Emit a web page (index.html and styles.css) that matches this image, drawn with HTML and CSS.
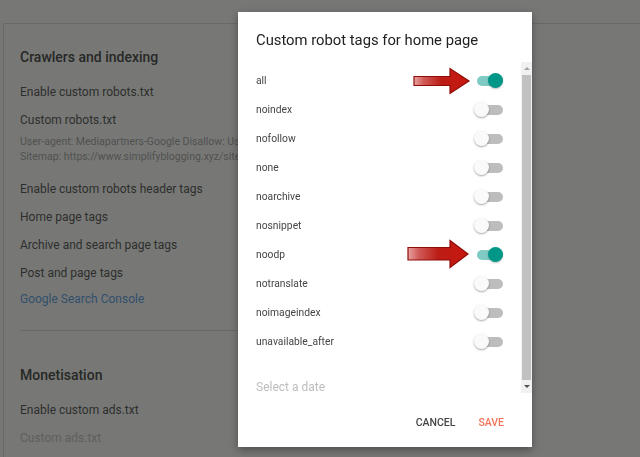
FILE: index.html
```html
<!DOCTYPE html>
<html lang="en">
<head>
<meta charset="utf-8">
<title>Settings – Crawlers and indexing</title>
<link rel="stylesheet" href="styles.css">
</head>
<body>
<main class="page">
  <div class="card">
    <section class="section">
      <h2 class="section-title">Crawlers and indexing</h2>
      <div class="setting">Enable custom robots.txt</div>
      <div class="setting">Custom robots.txt</div>
      <div class="code-line">User-agent: Mediapartners-Google Disallow: User-agent: * Disallow: /search Allow: /</div>
      <div class="code-line">Sitemap: https://www.simplifyblogging.xyz/sitemap.xml</div>
      <div class="setting gap">Enable custom robots header tags</div>
      <div class="setting">Home page tags</div>
      <div class="setting">Archive and search page tags</div>
      <div class="setting">Post and page tags</div>
      <div class="setting link">Google Search Console</div>
    </section>
    <section class="section second">
      <h2 class="section-title">Monetisation</h2>
      <div class="setting">Enable custom ads.txt</div>
      <div class="setting disabled">Custom ads.txt</div>
    </section>
  </div>
</main>

<div class="scrim"></div>

<div class="dialog" role="dialog" aria-label="Custom robot tags for home page">
  <h1 class="dialog-title">Custom robot tags for home page</h1>
  <div class="dialog-body">
    <div class="tag-list">
      <div class="tag-row">
        <span class="tag-name">all</span>
        <span class="switch on"><span class="track"></span><span class="thumb"></span></span>
        <svg class="pointer" width="58" height="28" viewBox="0 0 58 28" aria-hidden="true">
          <defs>
            <linearGradient id="shaft1" x1="0" x2="1" y1="0" y2="0">
              <stop offset="0" stop-color="#e7a3a1"/>
              <stop offset="0.18" stop-color="#cf5a57"/>
              <stop offset="0.5" stop-color="#bb1d16"/>
              <stop offset="1" stop-color="#c8170e"/>
            </linearGradient>
          </defs>
          <polygon points="1,9.5 37,9.5 37,1.5 56,14 37,26.5 37,18.5 1,18.5" fill="url(#shaft1)" stroke="#8e0d08" stroke-width="1.2" stroke-linejoin="miter"/>
        </svg>
      </div>
      <div class="tag-row"><span class="tag-name">noindex</span><span class="switch"><span class="track"></span><span class="thumb"></span></span></div>
      <div class="tag-row"><span class="tag-name">nofollow</span><span class="switch"><span class="track"></span><span class="thumb"></span></span></div>
      <div class="tag-row"><span class="tag-name">none</span><span class="switch"><span class="track"></span><span class="thumb"></span></span></div>
      <div class="tag-row"><span class="tag-name">noarchive</span><span class="switch"><span class="track"></span><span class="thumb"></span></span></div>
      <div class="tag-row"><span class="tag-name">nosnippet</span><span class="switch"><span class="track"></span><span class="thumb"></span></span></div>
      <div class="tag-row">
        <span class="tag-name">noodp</span>
        <span class="switch on"><span class="track"></span><span class="thumb"></span></span>
        <svg class="pointer long" width="64" height="30" viewBox="0 0 64 30" aria-hidden="true">
          <defs>
            <linearGradient id="shaft2" x1="0" x2="1" y1="0" y2="0">
              <stop offset="0" stop-color="#e7a3a1"/>
              <stop offset="0.18" stop-color="#cf5a57"/>
              <stop offset="0.5" stop-color="#bb1d16"/>
              <stop offset="1" stop-color="#c8170e"/>
            </linearGradient>
          </defs>
          <polygon points="1,8.5 43,8.5 43,1.5 61,15 43,28.5 43,21 1,21" fill="url(#shaft2)" stroke="#8e0d08" stroke-width="1.2" stroke-linejoin="miter"/>
        </svg>
      </div>
      <div class="tag-row"><span class="tag-name">notranslate</span><span class="switch"><span class="track"></span><span class="thumb"></span></span></div>
      <div class="tag-row"><span class="tag-name">noimageindex</span><span class="switch"><span class="track"></span><span class="thumb"></span></span></div>
      <div class="tag-row"><span class="tag-name">unavailable_after</span><span class="switch"><span class="track"></span><span class="thumb"></span></span></div>
      <div class="date-field">Select a date</div>
    </div>
    <div class="scrollbar" aria-hidden="true">
      <span class="arrow up"></span>
      <span class="scroll-thumb"></span>
      <span class="arrow down"></span>
    </div>
  </div>
  <div class="dialog-actions">
    <button class="btn">CANCEL</button>
    <button class="btn primary">SAVE</button>
  </div>
</div>
</body>
</html>
```

FILE: styles.css
```css
* {
  box-sizing: border-box;
}

html,
body {
  margin: 0;
  height: 100%;
  overflow: hidden;
  background: #ffffff;
  font-family: Roboto, "Noto Sans", "Liberation Sans", sans-serif;
}

/* ---------- settings page underneath ---------- */

.page {
  padding: 23px 0 0 3px;
}

.card {
  border: 1px solid #e0e0e0;
  border-right: none;
  width: 700px;
  background: #ffffff;
}

.section {
  margin: 0 0 0 16px;
  padding: 23px 0 19px;
  border-bottom: 1px solid #dedede;
  width: 330px;
}

.section.second {
  border-bottom: none;
  padding-top: 34px;
}

.section-title {
  margin: 0 0 11px;
  font-size: 14px;
  line-height: 20px;
  font-weight: 500;
  color: #525252;
  white-space: nowrap;
}

.setting {
  font-size: 12px;
  line-height: 28px;
  color: #616161;
  white-space: nowrap;
}

.setting.gap {
  margin-top: 11px;
}

.setting.link {
  line-height: 24px;
  color: #6aa6e8;
}

.setting.disabled {
  color: #c9c9c9;
}

/* long values run on under the dialog, so the line stops at its edge */
.code-line {
  width: 218px;
  overflow: hidden;
  font-size: 10.5px;
  line-height: 15px;
  color: #ababab;
  white-space: nowrap;
}

/* ---------- modal ---------- */

.scrim {
  position: fixed;
  inset: 0;
  background: rgba(3, 5, 1, 0.54);
}

.dialog {
  position: absolute;
  left: 238px;
  top: 12px;
  width: 294px;
  height: 435px;
  background: #ffffff;
  box-shadow: 0 3px 8px rgba(0, 0, 0, 0.35);
  display: flex;
  flex-direction: column;
}

.dialog-title {
  margin: 0;
  padding: 18px 18px 0;
  font-size: 14.8px;
  line-height: 20px;
  font-weight: 400;
  color: #222222;
}

.dialog-body {
  margin-top: 12px;
  height: 331px;
  display: flex;
}

.tag-list {
  flex: 1;
  overflow: hidden;
  padding: 4px 18px 0;
}

.tag-row {
  position: relative;
  height: 29px;
  display: flex;
  align-items: center;
  justify-content: space-between;
}

.tag-name {
  font-size: 10.3px;
  color: #454545;
}

/* toggle */
.switch {
  position: relative;
  width: 29px;
  height: 16px;
  display: flex;
  align-items: center;
  justify-content: flex-end;
}

.track {
  width: 26px;
  height: 10px;
  border-radius: 5px;
  background: #bdbdbd;
}

.thumb {
  position: absolute;
  left: 0;
  top: 0.5px;
  width: 15px;
  height: 15px;
  border-radius: 50%;
  background: #fafafa;
  box-shadow: 0 1px 2px rgba(0, 0, 0, 0.35);
}

.switch.on .track {
  background: #7fcbc4;
}

.switch.on .thumb {
  left: auto;
  right: 0;
  background: #009688;
  box-shadow: 0 1px 2px rgba(0, 0, 0, 0.25);
}

/* red callout arrows */
.pointer {
  position: absolute;
  right: 32px;
  top: 1px;
}

.pointer.long {
  right: 32px;
  top: -1px;
}

.date-field {
  margin-top: 25px;
  height: 12px;
  line-height: 12px;
  font-size: 12px;
  color: #bdbdbd;
}

/* scrollbar */
.scrollbar {
  width: 11px;
  background: #f1f1f1;
  display: flex;
  flex-direction: column;
  align-items: center;
}

.arrow {
  height: 13px;
  display: flex;
  align-items: center;
  justify-content: center;
}

.arrow.up::before,
.arrow.down::before {
  content: "";
  width: 0;
  height: 0;
  border-left: 3px solid transparent;
  border-right: 3px solid transparent;
}

.arrow.up::before {
  border-bottom: 3px solid #a3a3a3;
}

.arrow.down::before {
  border-top: 3px solid #505050;
}

.scroll-thumb {
  flex: 1;
  width: 9px;
  background: #c1c1c1;
}

/* actions */
.dialog-actions {
  flex: 1;
  display: flex;
  justify-content: flex-end;
  align-items: flex-start;
  gap: 23px;
  padding: 22px 28px 0 0;
}

.btn {
  border: none;
  background: none;
  padding: 0;
  font-family: inherit;
  font-size: 10.5px;
  line-height: 16px;
  font-weight: 500;
  color: #444444;
  cursor: pointer;
}

.btn.primary {
  color: #f2735a;
}
```
